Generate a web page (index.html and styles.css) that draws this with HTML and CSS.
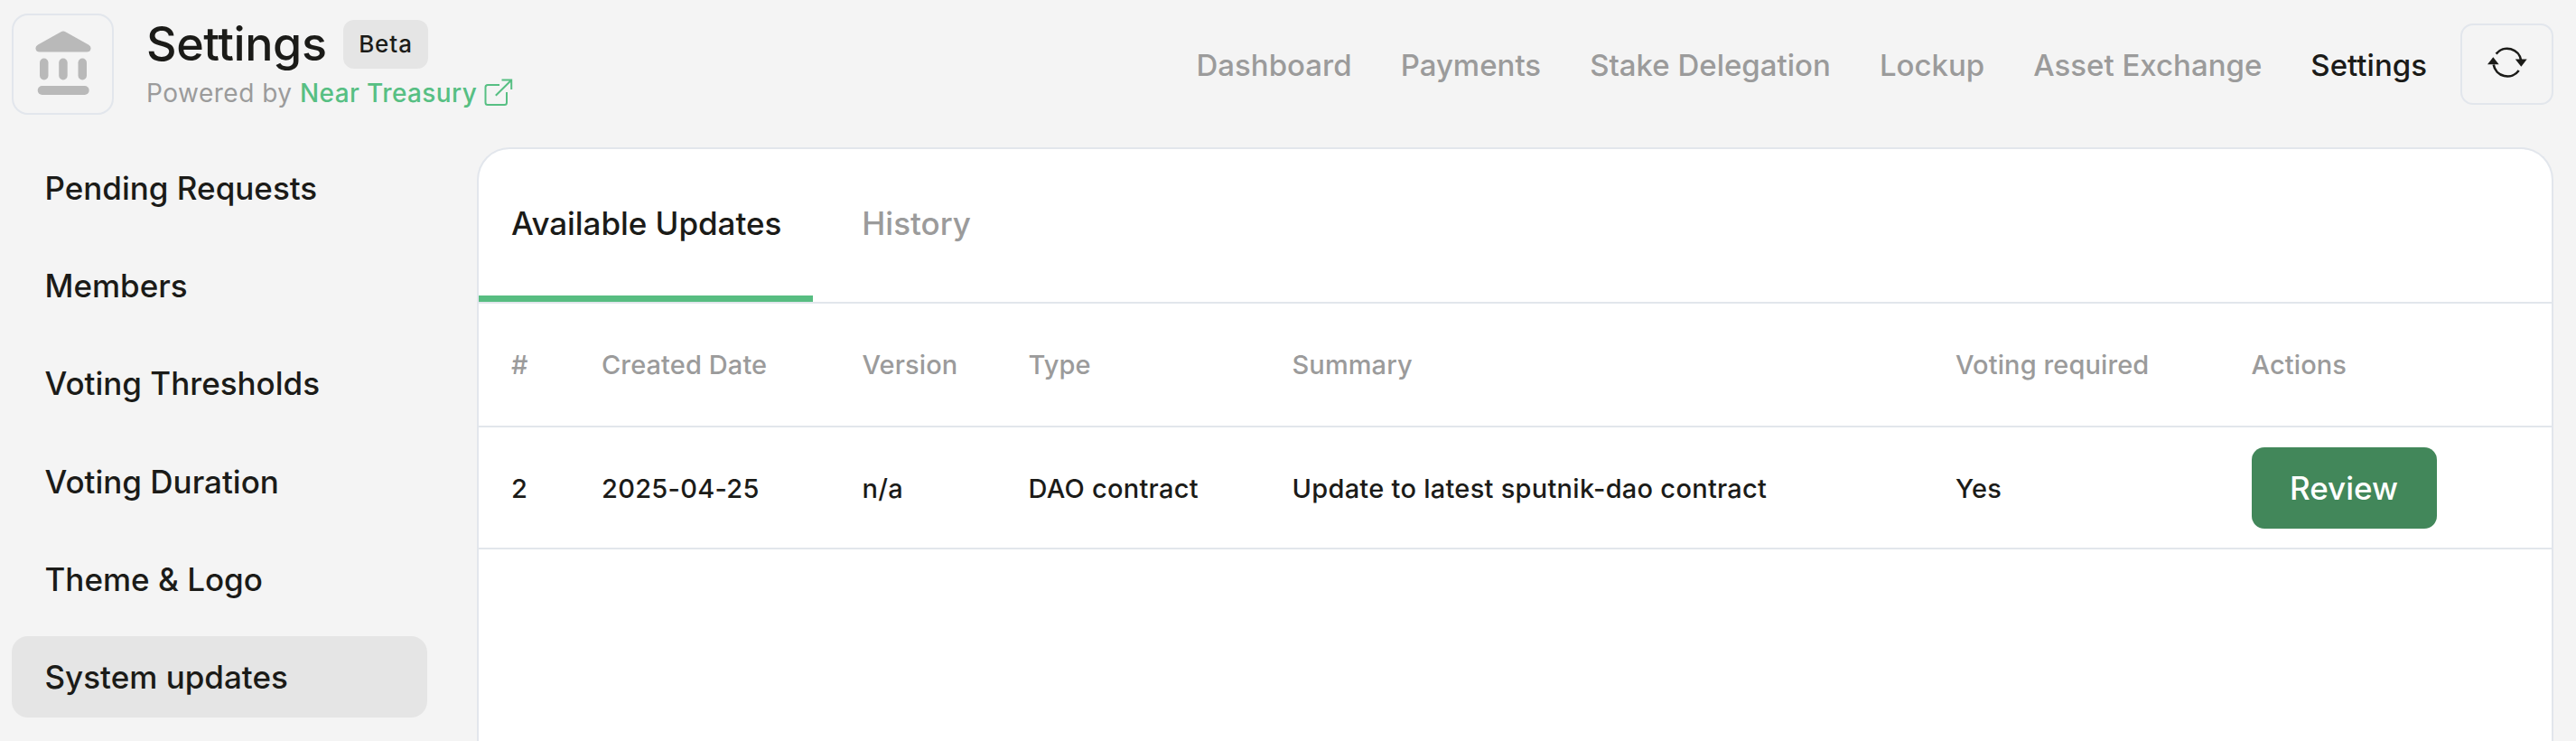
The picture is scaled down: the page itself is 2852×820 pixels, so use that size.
FILE: index.html
```
<!DOCTYPE html>
<html lang="en">
<head>
<meta charset="utf-8">
<title>Settings</title>
<link rel="stylesheet" href="styles.css">
</head>
<body>
<div class="page">
  <header class="header">
    <div class="logo">
      <svg width="62" height="72" viewBox="0 0 62 72" fill="#b9b9b9">
        <path d="M28.500 1.300Q31 -.3 33.500 1.300L59 15.500Q62 17.500 61.500 20Q61 23.500 57 23.500H5Q1 23.500 .5 20Q0 17.500 3 15.500Z"/>
        <rect x="5" y="30.500" width="9.500" height="24" rx="4.750"/>
        <rect x="26.200" y="30.500" width="9.500" height="24" rx="4.750"/>
        <rect x="47.500" y="30.500" width="9.500" height="24" rx="4.750"/>
        <rect x="2.700" y="61" width="57" height="10" rx="5"/>
      </svg>
    </div>
    <div class="heading">
      <div class="title-row">
        <h1 class="title">Settings</h1>
        <span class="badge">Beta</span>
      </div>
      <div class="powered">
        <span class="powered-label">Powered by</span>
        <a class="powered-link">Near Treasury</a>
        <svg class="external" width="32" height="32" viewBox="0 0 32 32" fill="none" stroke="#57bf83" stroke-width="2">
          <path d="M17 7H4Q1.500 7 1.500 9.500V26.500Q1.500 29 4 29H22.500Q25 29 25 26.500V15"/>
          <path d="M12.800 18.800L29.800 2M19.500 1.600H30.200V12"/>
        </svg>
      </div>
    </div>
    <nav class="nav">
      <a>Dashboard</a>
      <a>Payments</a>
      <a>Stake Delegation</a>
      <a>Lockup</a>
      <a>Asset Exchange</a>
      <a class="current">Settings</a>
    </nav>
    <button class="refresh" aria-label="Refresh">
      <svg width="44" height="36" viewBox="0 0 44 36" fill="none" stroke="#1b1b18" stroke-width="2.600">
        <path d="M9.600 8.600A15.600 15.600 0 0 1 37.200 16"/>
        <path d="M6.700 20.500A15.600 15.600 0 0 0 34.700 27"/>
        <path d="M30.800 14.500H43.700L37.300 22.700Z" fill="#1b1b18" stroke="none"/>
        <path d="M0 20.200H12.600L6.300 12.200Z" fill="#1b1b18" stroke="none"/>
      </svg>
    </button>
  </header>
  <div class="content">
    <aside class="sidebar">
      <a class="item">Pending Requests</a>
      <a class="item">Members</a>
      <a class="item">Voting Thresholds</a>
      <a class="item">Voting Duration</a>
      <a class="item">Theme &amp; Logo</a>
      <a class="item selected">System updates</a>
    </aside>
    <main class="panel">
      <div class="tabs">
        <a class="tab active">Available Updates</a>
        <a class="tab">History</a>
      </div>
      <div class="row head">
        <span>#</span><span>Created Date</span><span>Version</span><span>Type</span><span>Summary</span><span>Voting required</span><span>Actions</span>
      </div>
      <div class="row data">
        <span>2</span><span>2025-04-25</span><span>n/a</span><span>DAO contract</span><span>Update to latest sputnik-dao contract</span><span>Yes</span><button class="review">Review</button>
      </div>
    </main>
  </div>
</div>
</body>
</html>
```
FILE: styles.css
```
* { box-sizing: border-box; }
body {
  margin: 0;
  background: #f4f4f4;
  color: #1b1b18;
  font-family: Inter, "Liberation Sans", sans-serif;
  font-weight: 500;
}
button { font: inherit; color: inherit; background: none; }
svg { display: block; flex: none; }

.page {
  height: 820px;
  padding: 0 25px 0 13px;
  display: flex;
  flex-direction: column;
  overflow: hidden;
}
.header {
  height: 163px;
  flex: none;
  display: flex;
  align-items: flex-start;
}
.logo {
  width: 113px;
  height: 112px;
  margin-top: 15px;
  padding: 17px 0 0 24px;
  border: 2px solid #e2e6ec;
  border-radius: 18px;
}
.heading { margin: 22px 0 0 36px; }
.title-row { display: flex; align-items: center; height: 54px; }
.title {
  margin: 0;
  width: 218px;
  font-size: 52px;
  line-height: 54px;
  font-weight: 500;
  letter-spacing: -0.4px;
}
.badge {
  width: 94px;
  height: 54px;
  border-radius: 12px;
  background: #e5e5e5;
  font-size: 26px;
  line-height: 54px;
  letter-spacing: 0.9px;
  text-align: center;
}
.powered {
  display: flex;
  margin-top: 9px;
  font-size: 28px;
  line-height: 36px;
}
.powered-label { width: 170px; color: #9b9b9b; font-weight: 400; letter-spacing: 0.5px; }
.powered-link { width: 204px; color: #57bf83; letter-spacing: 0.4px; }
.external { margin-top: 2px; }
.nav {
  display: flex;
  gap: 54px;
  margin: 52px 36.5px 0 auto;
  font-size: 33px;
  line-height: 40px;
  color: #9b9b9b;
}
.current { color: #1b1b18; }
.refresh {
  width: 103.500px;
  height: 90px;
  margin-top: 26px;
  padding: 23px 0 0 28px;
  border: 2px solid #e2e6ec;
  border-radius: 14px;
  display: block;
}
.refresh svg { margin-bottom: 27px; }

.content { display: flex; flex: 1; }
.sidebar {
  width: 460px;
  margin-right: 55px;
  display: flex;
  flex-direction: column;
  gap: 18.2px;
}
.item {
  height: 90px;
  padding: 0 36.500px;
  border-radius: 18px;
  font-size: 35px;
  line-height: 90px;
}
.item.selected { background: #e5e5e5; }

.panel {
  flex: 1;
  border: 2px solid #e2e6ec;
  border-bottom: 0;
  border-radius: 36px 36px 0 0;
  background: #fff;
}
.tabs {
  display: flex;
  gap: 18px;
  height: 171px;
  border-bottom: 2px solid #e2e6ec;
  font-size: 35px;
  line-height: 164px;
}
.tab { padding: 0 35px 0 36px; color: #9b9b9b; }
.tab.active { color: #1b1b18; border-bottom: 7px solid #57bd81; letter-spacing: -0.05px; }

.row {
  display: grid;
  grid-template-columns: 100px 288.500px 184px 292px 734.500px 327.500px 1fr;
  align-items: center;
  padding: 0 36px;
  border-bottom: 2px solid #e2e6ec;
  font-size: 29px;
  line-height: 36px;
}
.head { height: 137px; color: #9b9b9b; letter-spacing: 0.1px; }
.data { height: 135px; letter-spacing: 0.27px; }
.data span { padding-top: 2px; }
.review {
  width: 205px;
  height: 90px;
  padding: 1px 0 0;
  border: 0;
  border-radius: 14px;
  background: #42875a;
  color: #fff;
  font-size: 35px;
  letter-spacing: 0;
}
```
